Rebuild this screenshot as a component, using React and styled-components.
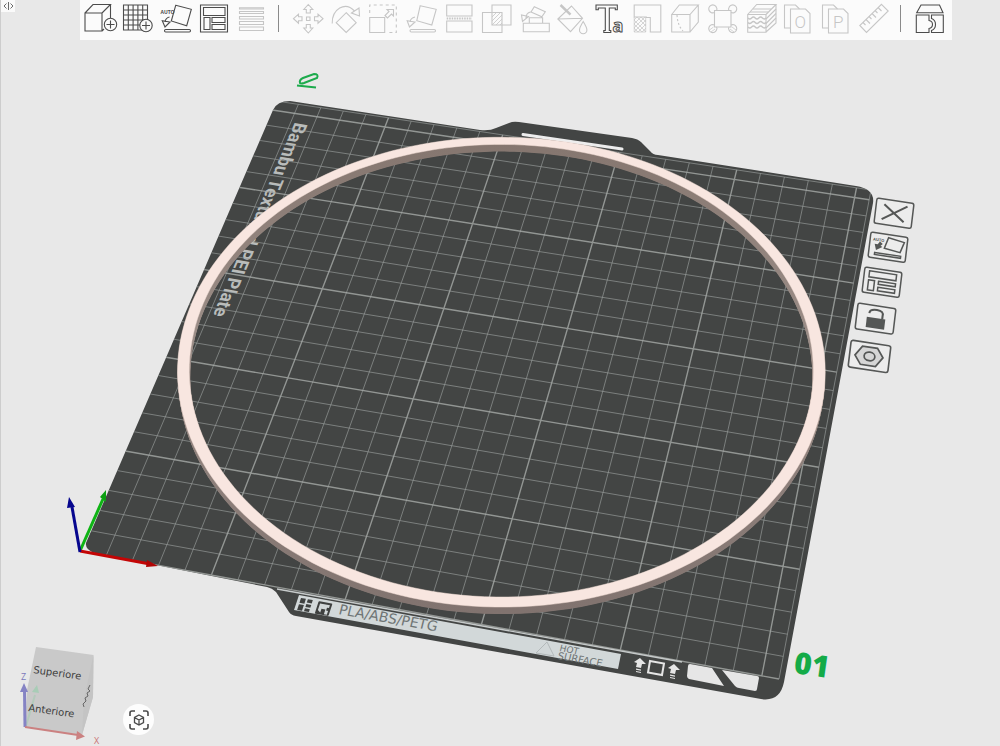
import React from "react";
import styled, { createGlobalStyle } from "styled-components";

const GlobalStyle = createGlobalStyle`
    body {
        margin: 0;
        background-color: #e8e8e8;
        font-family: "Open Sans", "Liberation Sans", sans-serif;
    }
`

const Viewport = styled.main`
    position: relative;
    width: 100%;
    aspect-ratio: 1000 / 746;
    overflow: hidden;
    box-sizing: border-box;
    background-color: #e8e8e8;
    border-left: 1px solid #cdcdcd;
`

const Scene = styled.svg`
    display: block;
    width: 100%;
    height: 100%;
`

const TopOverlay = styled.header`
    position: absolute;
    top: 0;
    left: 0;
    right: 0;
    display: flex;
    align-items: flex-start;
    gap: 65px;
    padding-right: 48px;
`

const CollapseButton = styled.button`
    display: flex;
    align-items: center;
    justify-content: center;
    width: 14px;
    height: 12px;
    padding: 0;
    border: none;
    background-color: #fafafa;
    cursor: pointer;
`

const Toolbar = styled.nav`
    display: flex;
    flex: 1;
    height: 40px;
    padding: 0 3px 0 1px;
    background-color: #fbfbfb;
`

const ToolButton = styled.button`
    display: flex;
    flex: 1;
    justify-content: center;
    min-width: 0;
    height: 36px;
    padding: 0;
    border: none;
    background: none;
    color: ${props => props.disabled ? '#c6c6c6' : '#4c4c4c'};
    cursor: ${props => props.disabled ? 'default' : 'pointer'};

    svg{
        flex-shrink: 0;
        width: 36px;
        height: 36px;
        fill: none;
        stroke: currentColor;
        stroke-width: 1.1;
        overflow: visible;
    }
    text{
        font-family: "Open Sans", "Liberation Sans", sans-serif;
        stroke: none;
        fill: currentColor;
    }
    .outlined{
        fill: #fbfbfb;
        stroke: currentColor;
        stroke-width: 1;
    }
    .letter{
        font-family: Roboto, "Liberation Sans", sans-serif;
        font-weight: 300;
    }
    .cover{
        fill: #fbfbfb;
    }
`

const Separator = styled.span`
    width: 1px;
    height: 27px;
    margin: 5px 10px 0 9px;
    background-color: #8a8a8a;
`

const PlateButton = styled.button`
    position: absolute;
    left: ${props => props.$x / 10}%;
    top: ${props => props.$y / 7.46}%;
    width: ${props => props.$width}px;
    padding: 0;
    border: none;
    background: none;
    color: #555756;
    cursor: pointer;

    svg{
        display: block;
        width: 100%;
        fill: none;
        stroke: currentColor;
        stroke-width: 1.5;
        overflow: visible;
    }
    text{
        font-family: "Open Sans", "Liberation Sans", sans-serif;
        stroke: none;
        fill: currentColor;
    }
`

const BottomOverlay = styled.div`
    position: absolute;
    left: 0;
    bottom: 0;
    display: flex;
    align-items: flex-end;
    gap: 6px;
`

const NavCube = styled.svg`
    width: 116px;
    height: 108px;
    font-family: "Open Sans", "Liberation Sans", sans-serif;
`

const FitButton = styled.button`
    display: flex;
    align-items: center;
    justify-content: center;
    width: 31px;
    height: 31px;
    margin-bottom: 11px;
    padding: 0;
    border: none;
    border-radius: 50%;
    background-color: #fdfdfd;
    color: #4a4a4a;
    cursor: pointer;
`

// Build plate, in millimetres
const BED = 256
const ORIGIN = [80, 551]
const CORNERS = [ORIGIN, [779, 679], [871, 190], [276, 101]]
const VERTICAL_VANISH = [500, 2735]
const Z_SCALE = -0.0008

// Perspective camera through the four corners of the plate
const makeProjector = ([[x0, y0], [x1, y1], [x2, y2], [x3, y3]]) => {
    const sx = x0 - x1 + x2 - x3
    const sy = y0 - y1 + y2 - y3
    const dx1 = x1 - x2, dx2 = x3 - x2
    const dy1 = y1 - y2, dy2 = y3 - y2
    const det = dx1 * dy2 - dx2 * dy1
    const g = (sx * dy2 - dx2 * sy) / det
    const h = (dx1 * sy - sx * dy1) / det
    return (mx, my, mz = 0) => {
        const u = mx / BED
        const v = my / BED
        const k = mz * Z_SCALE
        const w = g * u + h * v + 1 + k
        return [
            ((x1 - x0 + g * x1) * u + (x3 - x0 + h * x3) * v + x0 + k * VERTICAL_VANISH[0]) / w,
            ((y1 - y0 + g * y1) * u + (y3 - y0 + h * y3) * v + y0 + k * VERTICAL_VANISH[1]) / w,
        ]
    }
}

const project = makeProjector(CORNERS)

const toPath = points => 'M' + points.map(([x, y]) => `${x.toFixed(1)} ${y.toFixed(1)}`).join('L')

const segment = (a, b) => toPath([project(...a), project(...b)])

const circle = (radius, z) => {
    const points = []
    for (let i = 0; i < 180; i++) {
        const a = i * Math.PI / 90
        points.push(project(128 + radius * Math.cos(a), 128 + radius * Math.sin(a), z))
    }
    return toPath(points) + 'Z'
}

const RING = { outer: 125, inner: 120.5, height: 4 }

const ring = z => circle(RING.outer, z) + circle(RING.inner, z)

const gridLines = bold => {
    const lines = []
    for (let mm = 0; mm <= 250; mm += 10) {
        if ((mm % 50 === 0) === bold) {
            if (mm > 0) lines.push(segment([mm, 0], [mm, BED]))
            lines.push(segment([0, mm], [BED, mm]))
        }
    }
    return lines.join('')
}

const PLATE = `M86 543 L273 110 Q277 101 290 101 L480 130 Q490 131 496 128 L509 123 Q513 121 519 122
    L632 138 Q638 139 641 142 L650 151 Q653 155 658 155 L856 186 Q875 189 873 203
    L784 682 Q780 702 761 699 L296 616 Q291 615 289 612 L276 592 Q272 588 267 587 L95 553 Q85 550 86 543Z`

function BuildPlate() {
    return (
        <g>
            <path d={PLATE} fill="#434544" />
            <g fill="#b9bcbb" fontFamily="Roboto, sans-serif" fontWeight="700">
                <text transform="translate(295 122) rotate(113) skewX(13)" fontSize="18">Bambu Textured PEI Plate</text>
            </g>
            <clipPath id="plate"><path d={PLATE} /></clipPath>
            <g fill="none" clipPath="url(#plate)">
                <path d={gridLines(false)} stroke="#9a9e9c" strokeOpacity="0.65" />
                <path d={gridLines(true)} stroke="#a6aaa8" strokeOpacity="0.8" strokeWidth="1.4" />
                <path d={segment([BED, 0], [BED, BED]) + segment([0, BED], [BED, BED])} stroke="#9a9e9c" strokeOpacity="0.65" />
            </g>
            <path d="M523 134.500L622 149" stroke="#ededed" strokeWidth="3" strokeLinecap="round" />
            <path d="M277 589L682 662" stroke="#c6caca" strokeWidth="1.4" />
            <PlateFront />
        </g>
    )
}

function PlateFront() {
    return (
        <g>
            <path d="M299 595L621 654L618 669L294 610Z" fill="#d2d8d9" />
            <g transform="translate(301 598) rotate(10) skewX(-8)" fill="#3f4140">
                <path d="M0 0h5v5h-5zM0 6.500h5v6h-5zM7 0h5v3.500h-5zM7 5h5v3h-5zM7 9.500h5v3h-5z" />
                <path d="M19 0h12q1 0 1 1v11q0 1-1 1h-12q-1 0-1-1v-11q0-1 1-1zM20 2v7l3 2v-4h4v5h3v-4h-2v-3h2v-3z" fillRule="evenodd" />
            </g>
            <g fill="#6f7575" fontFamily="'DejaVu Sans', sans-serif">
                <text transform="translate(338 614) rotate(10) skewX(-4)" fontSize="14">PLA/ABS/PETG</text>
                <text transform="translate(559 651) rotate(10) skewX(-4)" fontSize="9">HOT</text>
                <text transform="translate(557 659) rotate(10) skewX(-4)" fontSize="10">SURFACE</text>
            </g>
            <path d="M536 653L547 642L554 656Z" fill="none" stroke="#b3b9ba" />
            <g fill="#e6e6e6">
                <path d="M640 658L646 664L642 664L641 668L636 667L637 663L634 662Z M636 668.500l5 1v1.200l-5-1zM636 671l5 1v1l-5-1z" />
                <path d="M674 664L680 670L676 670L675 674L670 673L671 669L668 668Z M670 674.500l5 1v1.200l-5-1zM670 677l5 1v1l-5-1z" />
                <path d="M690 664L712 668L724 686L689 679Q687 678 687 676L688 666Q688 664 690 664Z" />
                <path d="M722 670L757 676Q759 676 759 678L757 689Q757 691 755 691L739 688Q737 688 735 686Z" />
            </g>
            <path d="M650 661L664 663.500L662 675L648 672.500Z" fill="none" stroke="#e6e6e6" strokeWidth="2" />
        </g>
    )
}

function RingModel() {
    const layers = []
    for (let z = 0; z < RING.height; z += 0.25) layers.push(z)
    return (
        <g fillRule="evenodd">
            <linearGradient id="wall" x1="0" y1="0" x2="0" y2="1">
                <stop offset="0" stopColor="#85766f" />
                <stop offset="0.4" stopColor="#9b8d87" />
                <stop offset="1" stopColor="#81736f" />
            </linearGradient>
            {layers.map(z => <path key={z} d={ring(z)} fill="url(#wall)" />)}
            <path d={ring(RING.height)} fill="#f8e6e0" stroke="#f3ded7" strokeWidth="0.5" />
        </g>
    )
}

function Axes() {
    return (
        <g strokeWidth="3">
            <path d="M80 551L103 499" stroke="#0eb414" />
            <path d="M106 490L100 497L106 502Z" fill="#0ca012" />
            <path d="M80 551L150 564" stroke="#c30505" />
            <path d="M158 566L147 560L146 567Z" fill="#b00505" />
            <path d="M80 552L72 507" stroke="#06068e" />
            <path d="M69 497L67 508L75 507Z" fill="#06068e" />
        </g>
    )
}

const icons = {
    addModel: <>
        <path d="M3 13h17v18h-17zM3 13L11 4.500H28.500L20 13M28.500 4.500V18M20 31L22 29" />
        <circle className="cover" cx="28.500" cy="24.500" r="6.200" /><path d="M28.500 20.500v8M24.500 24.500h8" />
    </>,
    addPlate: <>
        <path d="M4.500 5h24v25h-24zM9.300 5v25M14.100 5v25M18.900 5v25M23.700 5v25M4.500 10h24M4.500 15h24M4.500 20h24M4.500 25h24" />
        <circle className="cover" cx="27" cy="25.500" r="6.200" /><path d="M27 21.500v8M23 25.500h8" />
    </>,
    autoOrient: <>
        <path d="M18.700 5.300L34.300 9.300L29.700 25.700L14.300 21zM12.500 17Q8.500 18 8 22M5.300 20.700L8 27L13 22z" />
        <rect x="7.500" y="29.500" width="26" height="2.500" rx="1.200" />
        <text x="3.500" y="13.500" fontSize="5" fontWeight="700">AUTO</text>
    </>,
    arrange: <>
        <path d="M5.500 5h27v27h-27zM8.500 7.500h21.500v8h-21.500zM9 17.500h6v12h-6zM17 17.500h13v5h-13zM17 24.500h13v5h-13z" />
    </>,
    split: <path d="M7.500 7.700h24v1.300h-24zM7.500 11.500h24v2h-24zM7.500 16.500h24v2.500h-24zM7.500 21.500h24v3h-24zM7.500 27h24v3.500h-24z" />,
    move: <>
        <path d="M16.500 17h3.500v3.500h-3.500zM18.300 4.500l4.500 5h-2.500v3.500h-4v-3.500h-2.500zM18.300 33l4.500-5h-2.500v-3.500h-4v3.500h-2.500z" />
        <path d="M3.500 18.700l5-4.500v2.500h3.500v4h-3.500v2.500zM33 18.700l-5-4.500v2.500h-3.500v4h3.500v2.500z" />
    </>,
    rotate: <path d="M18.200 12.700l10 10l-10 9.700l-10-9.700zM4.200 23.500C4 9 17 1 26.500 11M23.500 13L31 8L31.500 16z" />,
    scale: <>
        <path d="M4.700 17.500h15v15h-15zM21 16.500l1.500 1.500l4-4l2 2v-6.500h-6.500l2 2l-4 4z" />
        <path d="M4.700 13V5H31.300V32.500H22" strokeDasharray="3 3" />
    </>,
    layFlat: <>
        <path d="M17.200 5.700L33.200 9.300L28.800 25L13.800 20.700zM12 17Q7.500 18 7 22M4.200 20.700L6.500 27L12 22z" />
        <rect x="7" y="29.500" width="25.500" height="2.500" rx="1.200" />
    </>,
    cut: <>
        <path d="M5.700 5H31v11H5.700zM5.700 21H31v11H5.700z" />
        <path d="M5.700 18.500H31" strokeWidth="2" strokeDasharray="1.500 1" />
    </>,
    boolean: <>
        <path d="M14 5h19v20h-19zM4.500 12.500h19.500v20h-19.500z" />
        <path d="M14 17l4.500-4.500M14 21l8.500-8.500M14 25l10-10M18 25l6-6M22 25l2-2" strokeWidth="0.800" />
    </>,
    support: <path d="M18.300 6.700l11 5l-3.500 5l-10.800-4.700zM13.300 17.700h13.300v5.600h-13.300zM7.300 23.300h26v8.400h-26zM5.500 15l1 6.500l6-5zM10 18Q10 13 14.500 12" />,
    paint: <>
        <path d="M17.500 6l11 12.300l-12 13.400l-12.700-12.700zM3.800 19l24.700-.7M29.200 21.500q-3.700 6-3.700 8.500a3.700 3.700 0 0 0 7.400 0q0-2.500-3.700-8.500z" />
        <path d="M6.500 5l10 9.700" strokeWidth="2.500" />
    </>,
    text: <>
        <path d="M5 5h21.300v4.700h-2v-1.700h-6v22.500h1.500v2h-7v-2h1.500v-22.500h-7v1.700h-2.300z" />
        <text className="outlined" x="21.500" y="32" fontSize="18" fontWeight="700">a</text>
    </>,
    supportPaint: <>
        <path d="M5.200 5h26.600v27h-10.500v-14.500h-4v-.5h-12.100z" />
        <path d="M5.200 17v15h11.500v-15M5 20l3-3M5 24l7-7M5 28l11-11M5 32l12-12M9 32l8-8M13 32l4-4M5 28l4 4M5 24l8 8M5 20l12 12M8 17l9 9M12 17l5 5" strokeWidth="0.700" />
    </>,
    seam: <>
        <path d="M5.700 14.500H24V32H5.700zM5.700 14.500L13.300 5H32.300L24 14.500M32.300 5V22L24 32" />
        <path d="M11 15Q11.500 25 17 31" strokeDasharray="2 2" />
    </>,
    corners: <>
        <path d="M10.500 10.500h16.500v16.500h-16.500z" />
        <path d="M10.500 12.500a4 4 0 1 1 2-5q1 1.500 0 3M25 10.500q-1-1.500 0-3a4 4 0 1 1 2 5M10.500 25a4 4 0 1 0 2 5q1-1.500 0-3M25 27q-1 1.500 0 3a4 4 0 1 0 2-5" />
        <path d="M5.500 30l4-3M7 32l4-3M28 27l4 3M26 29l4 3" strokeWidth="0.700" />
    </>,
    fuzzy: <>
        <path d="M5.700 14.500H24V32.300H5.700zM5.700 14.500L14.700 4.500H34L24 14.500M34 4.500V23L24 32" />
        <path d="M6 18q1.800 2 3.600 0t3.600 0t3.600 0t3.600 0t3.600 0M6 22.500q1.800 2 3.600 0t3.600 0t3.600 0t3.600 0t3.600 0M6 27q1.800 2 3.600 0t3.600 0t3.600 0t3.600 0t3.600 0" strokeWidth="1.300" />
        <path d="M24 19l10-10M24 23.500l10-10M24 28l10-10M8 12h18M11 9h18" />
    </>,
    objectPage: <>
        <path d="M11.500 28h-6v-23h11l4 4" />
        <path d="M11.500 9h15l4.500 4.500v19.500h-19.500z" />
        <text className="letter" x="15.500" y="27.500" fontSize="17">O</text>
    </>,
    partPage: <>
        <path d="M11.500 28h-6v-23h11l4 4" />
        <path d="M11.500 9h15l4.500 4.500v19.500h-19.500z" />
        <text className="letter" x="16" y="27.500" fontSize="17">P</text>
    </>,
    measure: <path d="M26.500 4.300L33.200 11L11.500 32.500L4.800 25.500zM8 22.500l2.500 2.500M11 19.500l4 4M14 16.500l2.500 2.500M17 13.500l4 4M20 10.500l2.500 2.500M23 7.500l3.500 3.500" />,
    assembly: <>
        <path d="M9 5h18.500l3.500 7.700h-26.300z" />
        <path d="M17 15h-12.700v17.500h12.700v-4q3.500-.5 3.500-4t-3.500-4z" />
        <path d="M19.500 15h11.800v17.500h-11.800v-2q4-1.500 4-6t-4-6z" />
    </>,
}

const plateTools = [
    { icon: 'addModel', label: 'Aggiungi' },
    { icon: 'addPlate', label: 'Aggiungi piatto' },
    { icon: 'autoOrient', label: 'Orientamento automatico' },
    { icon: 'arrange', label: 'Disponi' },
    { icon: 'split', label: 'Altezza layer variabile', disabled: true },
]

const objectTools = [
    { icon: 'move', label: 'Sposta', disabled: true },
    { icon: 'rotate', label: 'Ruota', disabled: true },
    { icon: 'scale', label: 'Ridimensiona', disabled: true },
    { icon: 'layFlat', label: 'Posiziona su faccia', disabled: true },
    { icon: 'cut', label: 'Taglia', disabled: true },
    { icon: 'boolean', label: 'Operazioni booleane', disabled: true },
    { icon: 'support', label: 'Supporti', disabled: true },
    { icon: 'paint', label: 'Colora', disabled: true },
    { icon: 'text', label: 'Testo' },
    { icon: 'supportPaint', label: 'Pittura supporti', disabled: true },
    { icon: 'seam', label: 'Pittura giunzione', disabled: true },
    { icon: 'corners', label: 'Orecchie bordo', disabled: true },
    { icon: 'fuzzy', label: 'Superficie ruvida', disabled: true },
    { icon: 'objectPage', label: 'Dividi in oggetti', disabled: true },
    { icon: 'partPage', label: 'Dividi in parti', disabled: true },
    { icon: 'measure', label: 'Misura', disabled: true },
]

function Tool({ icon, label, disabled }) {
    return (
        <ToolButton type="button" aria-label={label} disabled={disabled}>
            <svg viewBox="0 0 36 36">{icons[icon]}</svg>
        </ToolButton>
    )
}

const plateActions = [
    {
        label: 'Elimina piatto', x: 873, y: 197, width: 42,
        drawing: <path d="M8 5L29 20M31 4L7 20" strokeWidth="2" />,
    },
    {
        label: 'Orienta piatto', x: 867, y: 231, width: 42,
        drawing: <>
            <path d="M18 3L34 5.500L31 16L15 14zM6 19.500h26v2h-26z" />
            <path d="M5 11l2 6l6-4l-2-1l2-2l-3-2l-2 3z" fill="currentColor" stroke="none" />
            <text x="3" y="8" fontSize="4" fontWeight="700">AUTO</text>
        </>,
    },
    {
        label: 'Disponi piatto', x: 861, y: 266, width: 42,
        drawing: <path d="M5 3h27v6h-27zM5 12h6v10h-6zM15 12h17v3h-17zM15 18h17v3.500h-17z" />,
    },
    {
        label: 'Blocca piatto', x: 854, y: 302, width: 43,
        drawing: <>
            <path d="M10 12h18v10h-18z" fill="currentColor" stroke="none" />
            <path d="M12 8q0-4 7-4t6 5v3" strokeWidth="2" />
        </>,
    },
    {
        label: 'Impostazioni piatto', x: 847, y: 339, width: 45,
        drawing: <>
            <path d="M5 13L11 4H25L31 12L25 21H11z" fill="#d6d6d6" strokeWidth="1.600" />
            <ellipse cx="18.500" cy="12.500" rx="5" ry="4" strokeWidth="1.600" />
        </>,
    },
]

function PlateAction({ action }) {
    return (
        <PlateButton type="button" aria-label={action.label} $x={action.x} $y={action.y} $width={action.width}>
            <svg viewBox="0 0 42 33">
                <g transform="matrix(1 .15 -.12 1 4 1)">
                    <rect width="37" height="25" rx="2" fill="#ececec" />
                    {action.drawing}
                </g>
            </svg>
        </PlateButton>
    )
}

function ViewCube() {
    return (
        <NavCube viewBox="1 638 116 108" role="img" aria-label="Cubo di navigazione">
            <path d="M36 647L93.500 655L93 697L82 735L25 727L27 690Z" fill="#c9c9c9" />
            <path d="M93.500 655L93 697L82 735L84 699Z" fill="#c4c4c4" />
            <path d="M26 726L35 695" stroke="#b3cabb" strokeWidth="2" />
            <path d="M37 685L32 692L39 693Z" fill="#a8ccb6" />
            <g fill="#3c3c3c" fontFamily="'DejaVu Sans', sans-serif" fontSize="10">
                <text transform="translate(33 673) rotate(8)">Superiore</text>
                <text transform="translate(28 711) rotate(8)">Anteriore</text>
            </g>
            <path d="M90 685l-2 4l2 2l-3 2l1 3l-3 2l1 3l-3 3l1 3" fill="none" stroke="#666" />
            <path d="M25 727L24.500 690" stroke="#8583c4" strokeWidth="3" />
            <path d="M24 683L20 692H28Z" fill="#8583c4" />
            <path d="M25 727L78 735" stroke="#cb8181" strokeWidth="2" />
            <path d="M85 736.500L77 731L76 740Z" fill="#cb8181" />
            <text x="21" y="680" fontSize="9" fill="#7a78bb">Z</text>
            <text x="94" y="744" fontSize="9" fill="#c87474">X</text>
        </NavCube>
    )
}

export default function App() {
    return (
        <>
            <GlobalStyle />
            <Viewport>
                <Scene viewBox="1 0 999 746" preserveAspectRatio="none">
                    <BuildPlate />
                    <RingModel />
                    <Axes />
                    <path d="M297 85.500L316 87.500M300 83q-1-3 3-5l11-4q5 0 3 4l-13 5q-3 1-4 0z" fill="none" stroke="#1cab4c" strokeWidth="2" />
                    <text
                        transform="translate(793 673) rotate(8)"
                        fontFamily="'Open Sans', sans-serif"
                        fontSize="30"
                        fontWeight="800"
                        fill="#14ab48">01</text>
                </Scene>
                {plateActions.map(action => <PlateAction key={action.label} action={action} />)}
                <TopOverlay>
                    <CollapseButton type="button" aria-label="Mostra pannello">
                        <svg width="11" height="8" fill="none" stroke="#6b6b6b">
                            <path d="M3.500 1.500L1 4L3.500 6.500M5.500 0V8M7.500 1.500L10 4L7.500 6.500" />
                        </svg>
                    </CollapseButton>
                    <Toolbar>
                        {plateTools.map(tool => <Tool key={tool.icon} {...tool} />)}
                        <Separator />
                        {objectTools.map(tool => <Tool key={tool.icon} {...tool} />)}
                        <Separator />
                        <Tool icon="assembly" label="Vista assemblaggio" />
                    </Toolbar>
                </TopOverlay>
                <BottomOverlay>
                    <ViewCube />
                    <FitButton type="button" aria-label="Adatta vista">
                        <svg width="20" height="20" fill="none" stroke="currentColor" strokeWidth="1.600">
                            <path d="M1 6V3q0-2 2-2h3M14 1h3q2 0 2 2v3M19 14v3q0 2-2 2h-3M6 19H3q-2 0-2-2v-3" />
                            <path d="M10 5l4.500 2.500v5l-4.500 2.500l-4.500-2.500v-5zM5.500 7.500L10 10L14.500 7.500M10 10v5" strokeWidth="1.300" />
                        </svg>
                    </FitButton>
                </BottomOverlay>
            </Viewport>
        </>
    )
}
